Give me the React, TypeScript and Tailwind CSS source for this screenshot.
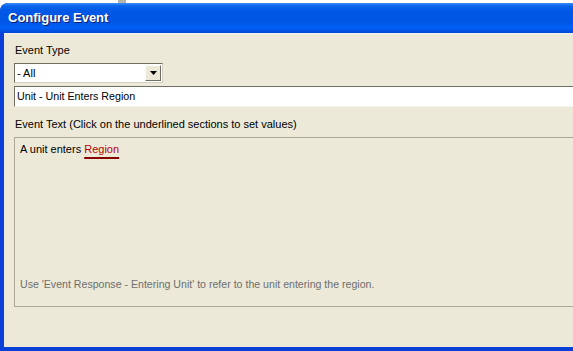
import { useState } from "react";

const ui = { fontFamily: '"Liberation Sans", Arial, sans-serif' };

export default function App() {
  const [eventType] = useState("- All");

  return (
    <div className="w-[573px] h-[351px] bg-white overflow-hidden relative" style={ui}>
      {/* scrap of the window behind */}
      <div className="absolute left-[118px] top-0 w-[8px] h-[3px] bg-[#b8b4a8]" />

      <div className="mt-[3px] h-[348px] flex flex-col rounded-tl-[8px] overflow-hidden bg-[#0a3fd8]">
        {/* Title bar */}
        <div className="h-[30px] flex items-center pl-[8px] bg-[linear-gradient(to_bottom,#3b8cf5_0px,#0a64ec_3px,#0058e6_8px,#0055e5_18px,#0160f6_25px,#0046d5_30px)]">
          <span className="text-white text-[13px] font-bold [text-shadow:1px_1px_0_#0a1c6e]">
            Configure Event
          </span>
        </div>

        {/* Body */}
        <div className="flex-1 ml-[4px] mb-[4px] bg-[#ece9d8] border-t border-t-[#f4f2e8] pl-[10px] pt-[9px] flex flex-col text-[11px] text-black">
          <div className="h-[14px] leading-[14px] pl-[1px]">Event Type</div>

          <div className="mt-[6px] w-[149px] h-[20px] bg-white border border-t-[#716f64] border-l-[#716f64] border-r-[#d4d0c8] border-b-[#d4d0c8] flex items-center">
            <span className="flex-1 pl-[2px] leading-[18px]">{eventType}</span>
            <div className="w-[16px] h-[16px] mr-[1px] bg-[#ece9d8] border border-t-white border-l-white border-r-[#716f64] border-b-[#716f64] flex items-center justify-center">
              <svg width="7" height="4" viewBox="0 0 7 4">
                <path d="M0 0h7L3.5 4z" fill="#000" />
              </svg>
            </div>
          </div>

          <div className="mt-[3px] h-[21px] bg-white border-t border-l border-t-[#716f64] border-l-[#716f64] border-b border-b-[#f5f4ee] flex items-center pl-[2px] text-[10.7px]">
            Unit - Unit Enters Region
          </div>

          <div className="mt-[10px] h-[14px] leading-[14px] pl-[1px]">
            Event Text (Click on the underlined sections to set values)
          </div>

          <div className="mt-[6px] h-[170px] border border-[#aca899] border-r-0 flex flex-col pl-[5px] pt-[4px]">
            <div className="leading-[14px]">
              A unit enters{" "}
              <span className="text-[#b8000a] underline decoration-[#8a0000] decoration-2 underline-offset-[4px]">
                Region
              </span>
            </div>
            <div className="mt-auto mb-[15px] text-[#6e6e6e] leading-[14px] text-[10.6px]">
              Use 'Event Response - Entering Unit' to refer to the unit entering the region.
            </div>
          </div>
        </div>
      </div>
    </div>
  );
}
